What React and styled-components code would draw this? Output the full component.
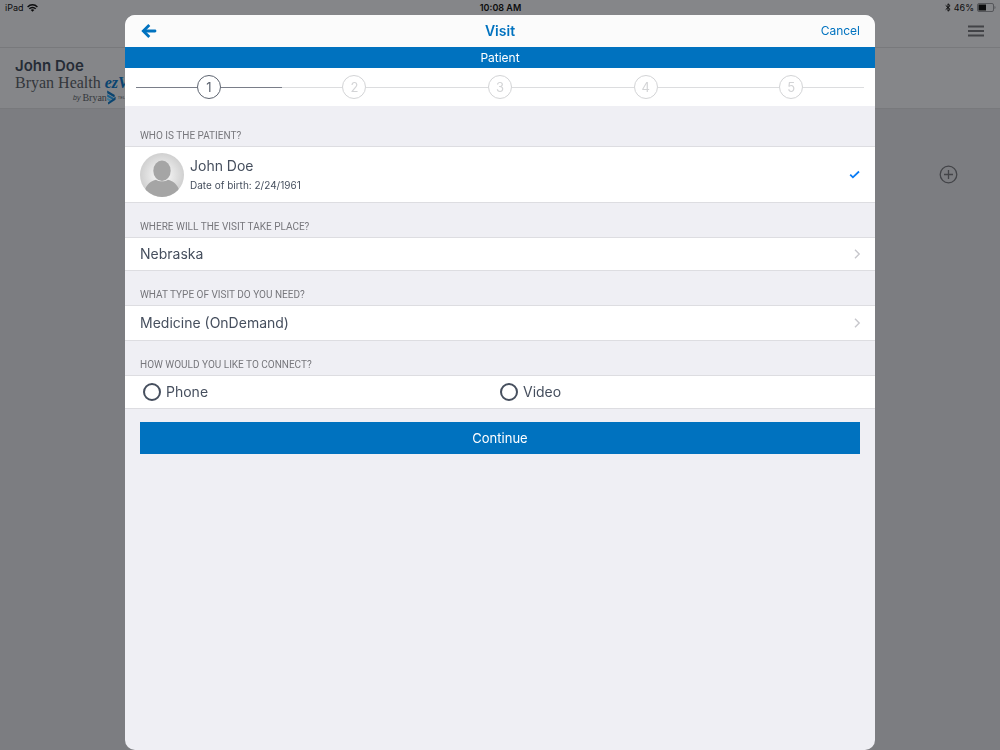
import React, { useState } from "react";
import styled, { createGlobalStyle } from "styled-components";

const blue = "#0072bf";
const slate = "#464f5e";
const hairline = "#dddde1";

const GlobalStyle = createGlobalStyle`
  * { box-sizing: border-box; }
  html, body, #root { height: 100%; }
  body {
    margin: 0;
    overflow: hidden;
    background: #7c7d81;
    font-family: Inter, "Liberation Sans", sans-serif;
    color: ${slate};
  }
  button {
    margin: 0;
    padding: 0;
    border: 0;
    background: none;
    color: inherit;
    font: inherit;
    cursor: pointer;
  }
  h1, h2, p, ol, fieldset, legend { margin: 0; padding: 0; border: 0; }
  svg { display: block; flex: none; }
`;

/* Page behind the dialog */

const Page = styled.div`
  min-height: 100%;
`;

const TopArea = styled.header`
  background: #858689;
  border-bottom: 1px solid #78797c;
`;

const StatusBar = styled.div`
  display: grid;
  grid-template-columns: 1fr auto 1fr;
  align-items: center;
  height: 15px;
  padding: 0 4px 0 5px;
  color: #0c0c0d;
  font-size: 9px;
  line-height: 15px;
`;

const StatusGroup = styled.div`
  display: flex;
  align-items: center;
  justify-content: ${(p) => (p.$end ? "flex-end" : "flex-start")};
  gap: 3px;
`;

const Clock = styled.time`
  font-weight: 600;
`;

const NavBar = styled.nav`
  display: flex;
  align-items: center;
  justify-content: flex-end;
  height: 32px;
  padding: 0 16px;
`;

const Profile = styled.section`
  height: 61px;
  padding: 8px 15px 0;
  background: #858689;
  border-bottom: 1px solid #78797c;
`;

const ProfileName = styled.h2`
  color: #252c36;
  font-size: 15px;
  line-height: 19px;
  font-weight: 600;
`;

const Brand = styled.div`
  width: 136px;
  white-space: nowrap;
  font-family: "Liberation Serif", serif;
  color: #33363b;
`;

const BrandName = styled.div`
  font-size: 16px;
  line-height: 15px;
`;

const BrandAccent = styled.em`
  color: #0a4470;
  font-weight: 700;
`;

const BrandBy = styled.div`
  display: flex;
  align-items: center;
  height: 15px;
  padding-left: 58px;
  font-size: 10px;
`;

const By = styled.i`
  margin-right: 2px;
  font-family: "Liberation Sans", sans-serif;
  font-size: 7px;
`;

const Tag = styled.span`
  margin-left: 2px;
  font-family: "Liberation Sans", sans-serif;
  font-size: 4px;
`;

const AddArea = styled.main`
  display: flex;
  justify-content: flex-end;
  padding: 56px 42px 0;
`;

/* Dialog */

const Overlay = styled.div`
  position: fixed;
  inset: 15px 0 0;
  display: flex;
  justify-content: center;
`;

const Dialog = styled.div`
  display: flex;
  flex-direction: column;
  width: 75%;
  overflow: hidden;
  border-radius: 10px;
  background: #efeff4;
`;

const DialogHeader = styled.header`
  display: grid;
  grid-template-columns: 1fr auto 1fr;
  align-items: center;
  height: 32px;
  padding: 0 15px;
  background: #fbfbfb;
  color: ${blue};
`;

const Title = styled.h1`
  font-size: 14px;
  line-height: 20px;
  font-weight: 600;
`;

const BackButton = styled.button`
  justify-self: start;
`;

const CancelButton = styled.button`
  justify-self: end;
  font-size: 12px;
  line-height: 20px;
`;

const StepTitle = styled.h2`
  background: ${blue};
  color: #fff;
  font-size: 12px;
  line-height: 21px;
  font-weight: 400;
  text-align: center;
`;

const Steps = styled.ol`
  display: grid;
  grid-template-columns: repeat(5, 1fr);
  align-items: center;
  height: 38px;
  padding: 0 11px;
  background: #fff;
  list-style: none;
`;

const Step = styled.li`
  display: flex;
  align-items: center;
  color: ${(p) => (p.$current ? "#5d6470" : "#d3d4d6")};

  &::before,
  &::after {
    content: "";
    flex: 1;
    height: 1px;
    background: ${(p) => (p.$current ? "#7a7e89" : "#dcdddf")};
  }
`;

const StepNumber = styled.span`
  width: 24px;
  height: 24px;
  border: 1px solid currentColor;
  border-radius: 50%;
  font-size: 13px;
  line-height: 22px;
  text-align: center;
`;

const Group = styled.fieldset`
  min-width: 0;
`;

const GroupLabel = styled.legend`
  display: flex;
  align-items: flex-end;
  width: 100%;
  height: ${(p) => (p.$first ? 40 : 34)}px;
  padding: 0 15px 3px;
  color: #77777c;
  font-family: Roboto, "Liberation Sans", sans-serif;
  font-size: 10px;
  line-height: 14px;
`;

const Row = styled.div`
  display: flex;
  align-items: center;
  width: 100%;
  border-top: 1px solid ${hairline};
  border-bottom: 1px solid ${hairline};
  background: #fff;
`;

const PatientRow = styled(Row).attrs({ as: "button", type: "button" })`
  gap: 6px;
  height: 57px;
  padding: 0 15px;
  text-align: left;
`;

const LinkRow = styled(Row).attrs({ as: "button", type: "button" })`
  justify-content: space-between;
  height: ${(p) => (p.$tall ? 36 : 34)}px;
  padding: 0 14px 0 15px;
  font-size: 14px;
  line-height: 20px;
`;

const PatientText = styled.span`
  display: flex;
  flex: 1;
  flex-direction: column;
`;

const PatientName = styled.span`
  font-size: 14px;
  line-height: 20px;
`;

const PatientBirth = styled.span`
  font-size: 10px;
  line-height: 18px;
`;

const ChoiceRow = styled(Row)`
  display: grid;
  grid-template-columns: 1fr 1fr;
  height: 34px;
  padding: 0 18px;
`;

const Choice = styled.label`
  display: flex;
  align-items: center;
  gap: 5px;
  font-size: 14px;
  line-height: 20px;
`;

const Radio = styled.input.attrs({ type: "radio" })`
  appearance: none;
  width: 18px;
  height: 18px;
  margin: 0;
  border: 2px solid ${slate};
  border-radius: 50%;

  &:checked {
    background: radial-gradient(${blue} 45%, transparent 50%);
  }
`;

const ContinueButton = styled.button`
  height: 32px;
  margin: 13px 15px 0;
  background: ${blue};
  color: #fff;
  font-size: 13px;
  line-height: 20px;
`;

const WifiIcon = () => (
  <svg width="11" height="8" viewBox="0 0 11 8" fill="none" stroke="#0c0c0d" strokeWidth="1.4" aria-hidden="true">
    <path d="M.6 2.9C3.4.1 7.6.1 10.4 2.9" />
    <path d="M2.3 4.8C4.1 3 6.9 3 8.7 4.8" />
    <path d="M5.5 7.8 3.7 6c1.1-.9 2.5-.9 3.6 0z" fill="#0c0c0d" stroke="none" />
  </svg>
);

const BluetoothIcon = () => (
  <svg width="6" height="9" viewBox="0 0 6 9" fill="none" stroke="#0c0c0d" strokeWidth="1" aria-hidden="true">
    <path d="M.7 2.4 5.1 6.4 3 8.2V.8l2.1 1.8L.7 6.6" />
  </svg>
);

const BatteryIcon = () => (
  <svg width="19" height="9" viewBox="0 0 19 9" aria-hidden="true">
    <rect x=".5" y=".5" width="16" height="8" rx="1.5" fill="none" stroke="#55565a" />
    <rect x="1.5" y="1.5" width="7.5" height="6" fill="#0c0c0d" />
    <path d="M17.5 3v3c1.3-.4 1.3-2.6 0-3z" fill="#55565a" />
  </svg>
);

const MenuIcon = () => (
  <svg width="16" height="12" viewBox="0 0 16 12" stroke="#424347" strokeWidth="2" aria-hidden="true">
    <path d="M0 1.5h16M0 6h16M0 10.5h16" />
  </svg>
);

const BrandMark = () => (
  <svg width="9" height="15" viewBox="0 0 9 15" aria-hidden="true">
    <path d="M.2.5 7.8 5 7.4 7.500.2 3.300z" fill="#0a4470" />
    <path d="M.2 4.200 6.800 8 5.400 9.600.2 6.800z" fill="#1b5f8c" />
    <path d="M.2 7.700 4.600 10 2.600 11.200.2 10z" fill="#3c7796" />
    <path d="M8.700 6.800 8.500 9.700 1.300 14.500.9 12.400z" fill="#0a4470" />
  </svg>
);

const PlusIcon = () => (
  <svg width="19" height="19" viewBox="0 0 19 19" fill="none" stroke="#434448" strokeWidth="1.3" aria-hidden="true">
    <circle cx="9.5" cy="9.5" r="8.3" />
    <path d="M9.5 5v9M5 9.5h9" />
  </svg>
);

const BackIcon = () => (
  <svg width="17" height="16" viewBox="0 0 17 16" fill="none" stroke={blue} strokeWidth="2.8" aria-hidden="true">
    <path d="M4 8h11" strokeLinecap="round" />
    <path d="M9.300 2 3.300 8l6 6" />
  </svg>
);

const CheckIcon = () => (
  <svg width="11" height="9" viewBox="0 0 11 9" fill="none" stroke="#0a7cf5" strokeWidth="1.8" aria-hidden="true">
    <path d="M1.200 4.700 3.900 7.300 10 1.500" />
  </svg>
);

const ChevronIcon = () => (
  <svg width="8" height="10" viewBox="0 0 8 10" fill="none" stroke="#c7c7cc" strokeWidth="1.4" aria-hidden="true">
    <path d="M2 .8 6.2 5 2 9.2" />
  </svg>
);

const Avatar = () => (
  <svg width="44" height="44" viewBox="0 0 44 44" aria-hidden="true">
    <defs>
      <radialGradient id="avatarShade">
        <stop offset="0.3" stopColor="#f0f0f0" />
        <stop offset="1" stopColor="#d0d0d0" />
      </radialGradient>
      <clipPath id="avatarClip">
        <circle cx="22" cy="22" r="22" />
      </clipPath>
    </defs>
    <circle cx="22" cy="22" r="22" fill="url(#avatarShade)" />
    <g clipPath="url(#avatarClip)" fill="#a5a5a5">
      <ellipse cx="22" cy="17.800" rx="8.700" ry="10.300" />
      <path d="M16 26.800c3.500 2 8.500 2 12 0 4.800 1.200 8.500 4 10.800 9.200V44H5.200v-8c2.300-5.200 6-8 10.800-9.200z" />
    </g>
  </svg>
);

export default function App() {
  const [connect, setConnect] = useState("");

  return (
    <>
      <GlobalStyle />
      <Page>
        <TopArea>
          <StatusBar>
            <StatusGroup>
              <span>iPad</span>
              <WifiIcon />
            </StatusGroup>
            <Clock>10:08 AM</Clock>
            <StatusGroup $end>
              <BluetoothIcon />
              <span>46%</span>
              <BatteryIcon />
            </StatusGroup>
          </StatusBar>
          <NavBar>
            <button type="button" aria-label="Menu">
              <MenuIcon />
            </button>
          </NavBar>
        </TopArea>
        <Profile>
          <ProfileName>John Doe</ProfileName>
          <Brand>
            <BrandName>
              Bryan Health <BrandAccent>ezVisit</BrandAccent>
            </BrandName>
            <BrandBy>
              <By>by</By>
              <span>Bryan</span>
              <BrandMark />
              <Tag>TELEMEDICINE</Tag>
            </BrandBy>
          </Brand>
        </Profile>
        <AddArea>
          <button type="button" aria-label="Add">
            <PlusIcon />
          </button>
        </AddArea>
      </Page>

      <Overlay>
        <Dialog role="dialog" aria-label="Visit">
          <DialogHeader>
            <BackButton type="button" aria-label="Back">
              <BackIcon />
            </BackButton>
            <Title>Visit</Title>
            <CancelButton type="button">Cancel</CancelButton>
          </DialogHeader>
          <StepTitle>Patient</StepTitle>
          <Steps>
            {[1, 2, 3, 4, 5].map((n) => (
              <Step key={n} $current={n === 1} aria-current={n === 1 ? "step" : undefined}>
                <StepNumber>{n}</StepNumber>
              </Step>
            ))}
          </Steps>

          <Group>
            <GroupLabel $first>WHO IS THE PATIENT?</GroupLabel>
            <PatientRow aria-pressed="true">
              <Avatar />
              <PatientText>
                <PatientName>John Doe</PatientName>
                <PatientBirth>Date of birth: 2/24/1961</PatientBirth>
              </PatientText>
              <CheckIcon />
            </PatientRow>
          </Group>

          <Group>
            <GroupLabel>WHERE WILL THE VISIT TAKE PLACE?</GroupLabel>
            <LinkRow>
              Nebraska
              <ChevronIcon />
            </LinkRow>
          </Group>

          <Group>
            <GroupLabel>WHAT TYPE OF VISIT DO YOU NEED?</GroupLabel>
            <LinkRow $tall>
              Medicine (OnDemand)
              <ChevronIcon />
            </LinkRow>
          </Group>

          <Group>
            <GroupLabel>HOW WOULD YOU LIKE TO CONNECT?</GroupLabel>
            <ChoiceRow>
              {["Phone", "Video"].map((name) => (
                <Choice key={name}>
                  <Radio
                    name="connect"
                    value={name}
                    checked={connect === name}
                    onChange={() => setConnect(name)}
                  />
                  {name}
                </Choice>
              ))}
            </ChoiceRow>
          </Group>

          <ContinueButton type="button">Continue</ContinueButton>
        </Dialog>
      </Overlay>
    </>
  );
}
